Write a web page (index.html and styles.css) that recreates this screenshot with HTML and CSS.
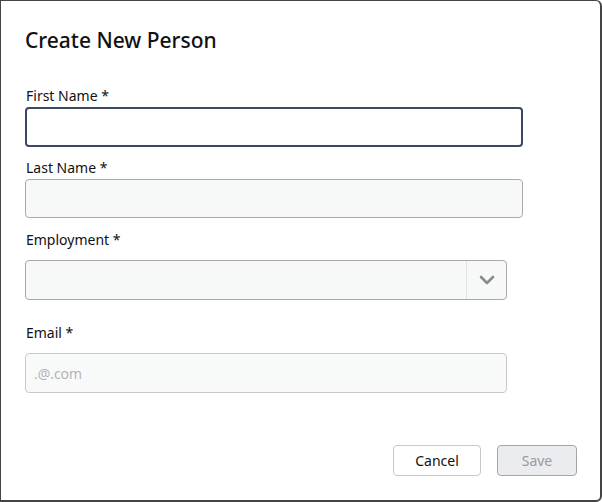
FILE: index.html
```html
<!DOCTYPE html>
<html>
<head>
<meta charset="utf-8">
<link rel="stylesheet" href="styles.css">
</head>
<body>
<div class="dialog">
  <h1 class="title">Create New Person</h1>
  <div class="field field-first">
    <label class="label">First Name *</label>
    <div class="input input-focus"></div>
  </div>
  <div class="field field-last">
    <label class="label">Last Name *</label>
    <div class="input input-gray"></div>
  </div>
  <div class="field field-emp">
    <label class="label">Employment *</label>
    <div class="select">
      <div class="select-value"></div>
      <div class="select-arrow">
        <svg width="16" height="10" viewBox="0 0 16 10"><path d="M2 2 L8 8 L14 2" fill="none" stroke="#8a8a8a" stroke-width="2.6" stroke-linecap="round" stroke-linejoin="round"/></svg>
      </div>
    </div>
  </div>
  <div class="field field-email">
    <label class="label">Email *</label>
    <div class="input input-email"><span class="placeholder">.@.com</span></div>
  </div>
  <div class="actions">
    <button class="btn btn-cancel">Cancel</button>
    <button class="btn btn-save">Save</button>
  </div>
</div>
</body>
</html>
```
FILE: styles.css
```css
* { box-sizing: border-box; }
html, body { margin: 0; padding: 0; background: #fff; }
body { font-family: "Noto Sans", "Open Sans", sans-serif; color: #111; }
.dialog {
  width: 602px;
  height: 502px;
  border: 1px solid #444;
  border-right-width: 2px;
  border-bottom-width: 2px;
  border-radius: 0 6px 6px 0;
  padding: 25px 0 0 24px;
  position: relative;
}
.title {
  margin: 0;
  font-size: 21px;
  font-weight: 500;
  line-height: 28px;
  color: #111;
}
.field { display: flex; flex-direction: column; }
.label {
  font-size: 14px;
  line-height: 18px;
  color: #111;
  padding-left: 1px;
}
.field-first { margin-top: 33px; }
.field-first .label { margin-bottom: 2px; }
.field-last { margin-top: 12px; }
.field-last .label { margin-bottom: 2px; }
.field-emp { margin-top: 13px; }
.field-emp .label { margin-bottom: 11px; }
.field-email { margin-top: 24px; }
.field-email .label { margin-bottom: 11px; }
.input {
  width: 498px;
  height: 40px;
  border-radius: 4px;
}
.input-focus { border: 2px solid #3b4960; background: #fff; }
.input-gray { border: 1px solid #aaaaaa; background: #f7f8f8; height: 39px; }
.input-email {
  width: 482px;
  border: 1px solid #c9c9c9;
  background: #f8f9f9;
  display: flex;
  align-items: center;
  padding-left: 8px;
}
.placeholder {
  font-family: "Open Sans", "Noto Sans", sans-serif;
  font-size: 14px;
  color: #b0b0b0;
}
.select {
  width: 482px;
  height: 40px;
  border: 1px solid #a9a9a9;
  border-radius: 4px;
  background: #f7f8f8;
  display: flex;
}
.select-value { flex: 1; }
.select-arrow {
  width: 40px;
  border-left: 1px solid #e2e3e3;
  display: flex;
  align-items: center;
  justify-content: center;
}
.actions {
  position: absolute;
  right: 23px;
  bottom: 24px;
  display: flex;
  gap: 16px;
}
.btn {
  height: 31px;
  border-radius: 4px;
  font-family: "Noto Sans", "Open Sans", sans-serif;
  font-size: 14px;
  padding: 0;
}
.btn-cancel { width: 88px; background: #fff; border: 1px solid #c8c8c8; color: #111; }
.btn-save { width: 80px; background: #ebecf0; border: 1px solid #a5a5a5; color: #9a9a9a; }
```
